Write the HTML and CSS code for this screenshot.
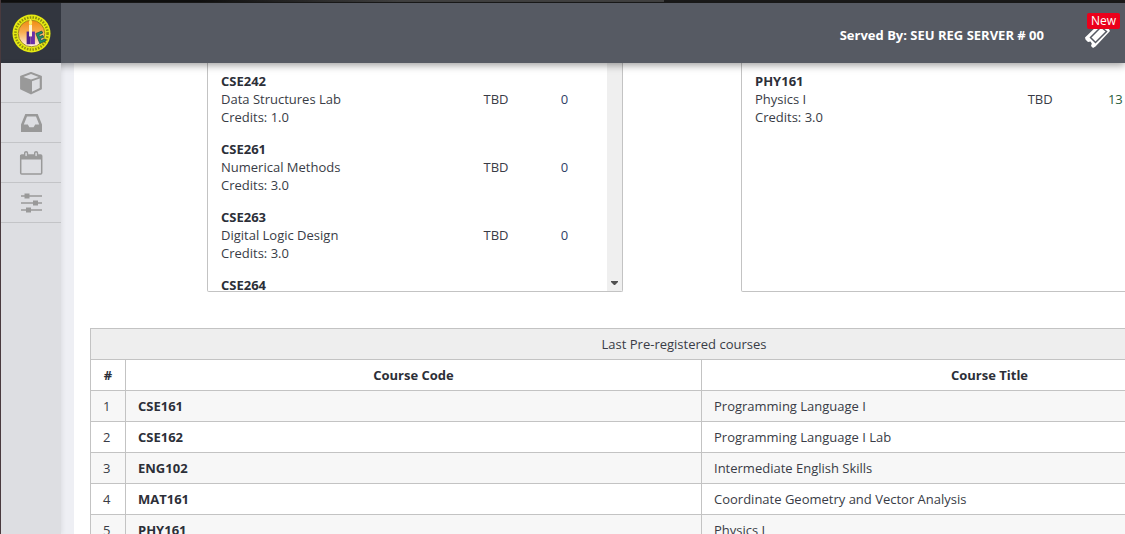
FILE: index.html
```
<!DOCTYPE html>
<html lang="en">
<head>
<meta charset="utf-8">
<title>Pre-registration</title>
<link rel="stylesheet" href="styles.css">
</head>
<body>
<div class="app">
  <div class="window-edge"><div class="window-tab"></div></div>
  <header class="topbar">
    <a class="brand" href="#" aria-label="Home">
      <svg class="seal" viewBox="0 0 40 40">
        <defs><linearGradient id="glow" x1="0" y1="0" x2="0" y2="1"><stop offset="0" stop-color="#f08a10"/><stop offset=".45" stop-color="#f8ae50"/><stop offset="1" stop-color="#fff4e8"/></linearGradient></defs>
        <circle cx="20" cy="20" r="19.5" fill="#e6ea12"/>
        <circle cx="20" cy="20" r="16.5" fill="none" stroke="#8f9010" stroke-width="2.600" stroke-dasharray="1.600 1.300"/>
        <circle cx="20" cy="20" r="13.600" fill="url(#glow)" stroke="#a08a1c"/>
        <path d="M15 18h4v13h-4z" fill="#4c208c"/>
        <path d="M19 18h4.500v13H19z" fill="#6a2fa8"/>
        <path d="M17.500 11h3v12h-3z" fill="#fff3d0"/>
        <path d="M19 5c2.500 3 2 5.500 0 6.500c-2-1-2.500-3.500 0-6.500z" fill="#ffef58"/>
        <path d="M24.500 20l6-2.500 1 2-4 1.700.8 2 3.300-1.300.8 2-3.300 1.300.8 2 4-1.600.8 2-6.200 2.600z" fill="#169468" stroke="#28474b" stroke-width=".8"/>
      </svg>
    </a>
    <span class="server">Served By: SEU REG SERVER # 00</span>
    <button class="ticket" type="button" aria-label="Tickets">
      <svg class="ticket-icon" viewBox="0 0 28 28">
        <path fill="#fff" d="M1 15.500L15 2h7l4 7L11.500 24.500 9 26l-2-2 .8-2.500L6.500 19.500l-2.500.5-2.500-2.500z"/>
        <path d="M6.500 15.500L17 5l5.500 4.500L11.500 20.500z" fill="#fff" stroke="#565a63" stroke-width="1.500"/>
      </svg>
      <span class="badge">New</span>
    </button>
  </header>
  <div class="body">
    <nav class="sidebar">
      <a class="nav-item" href="#" aria-label="Courses"><svg viewBox="0 0 24 24"><path d="M12 1.800l10 3.700v12.300l-10 4.700-10-4.700V5.500z" fill="#999" stroke="#999" stroke-width="1.800" stroke-linejoin="round"/><path d="M12 3l7.700 2.900L12 8.600 4.300 5.900zM13 10.300l7.700-2.800v9.500L13 20.700z" fill="#dddee2"/></svg></a>
      <a class="nav-item" href="#" aria-label="Inbox"><svg viewBox="0 0 24 24"><path fill="#999" fill-rule="evenodd" d="M6.300 3h12.400L23 13.500V21H2v-7.500zM8 5.500L4.800 13.500h4l1.600 2.700h4.200l1.600-2.700h4L17 5.500z"/></svg></a>
      <a class="nav-item" href="#" aria-label="Calendar"><svg viewBox="0 0 24 24"><rect x="1.700" y="4" width="21" height="19" rx="1" fill="none" stroke="#999" stroke-width="1.500"/><path d="M1 4h22v4.500H1z" fill="#999"/><rect x="5.700" y="0.700" width="2.800" height="5.300" rx="1.400" fill="#dddee2" stroke="#999" stroke-width="1.400"/><rect x="15.700" y="0.700" width="2.800" height="5.300" rx="1.400" fill="#dddee2" stroke="#999" stroke-width="1.400"/></svg></a>
      <a class="nav-item" href="#" aria-label="Settings"><svg viewBox="0 0 24 24"><path d="M2 5h21M2 12h21M2 19h21" stroke="#999" stroke-width="1.500"/><path d="M5.500 2.500h5v5h-5zM14 9.500h5v5h-5zM7 16.500h5v5H7z" fill="#999"/></svg></a>
    </nav>
    <main class="page">
      <div class="content">
        <div class="pickers">
          <section class="picker picker-scroll">
            <ul class="courses">
              <li class="course"><div><b>CSE242</b><br>Data Structures Lab<br>Credits: 1.0</div><span>TBD</span><span class="blue">0</span></li>
              <li class="course"><div><b>CSE261</b><br>Numerical Methods<br>Credits: 3.0</div><span>TBD</span><span class="blue">0</span></li>
              <li class="course"><div><b>CSE263</b><br>Digital Logic Design<br>Credits: 3.0</div><span>TBD</span><span class="blue">0</span></li>
              <li class="course"><div><b>CSE264</b></div></li>
            </ul>
            <div class="track"><svg class="arrow" viewBox="0 0 7 4"><path d="M0 0h7v1L4 4H3L0 1z" fill="#505050"/></svg></div>
          </section>
          <section class="picker">
            <ul class="courses">
              <li class="course"><div><b>PHY161</b><br>Physics I<br>Credits: 3.0</div><span>TBD</span><span class="green">13</span></li>
            </ul>
          </section>
        </div>
        <table class="history">
          <colgroup><col class="col-num"><col><col></colgroup>
          <thead>
            <tr><th class="title" colspan="3">Last Pre-registered courses</th></tr>
            <tr><th>#</th><th>Course Code</th><th>Course Title</th></tr>
          </thead>
          <tbody>
            <tr><td>1</td><td><b>CSE161</b></td><td>Programming Language I</td></tr>
            <tr><td>2</td><td><b>CSE162</b></td><td>Programming Language I Lab</td></tr>
            <tr><td>3</td><td><b>ENG102</b></td><td>Intermediate English Skills</td></tr>
            <tr><td>4</td><td><b>MAT161</b></td><td>Coordinate Geometry and Vector Analysis</td></tr>
            <tr><td>5</td><td><b>PHY161</b></td><td>Physics I</td></tr>
          </tbody>
        </table>
      </div>
    </main>
  </div>
</div>
</body>
</html>
```
FILE: styles.css
```
* { box-sizing: border-box; }
body {
  margin: 0;
  font: 13px/18px "Open Sans", "Noto Sans", sans-serif;
  color: #393c46;
  background: #fff;
}
.app {
  height: 100vh;
  display: flex;
  flex-direction: column;
  overflow: hidden;
  border-left: 1px solid #493a3e;
}
.window-edge { flex: none; height: 3px; background: #1b1b1b; }
.window-tab { width: 59%; height: 2px; background: linear-gradient(90deg, #101010 30%, #444 60%); }
.topbar {
  flex: none;
  height: 60px;
  display: flex;
  align-items: center;
  background: #565a63;
  color: #fff;
  position: relative;
  z-index: 2;
  box-shadow: 0 2px 8px rgba(0, 0, 0, .4);
}
.brand {
  width: 60px;
  height: 60px;
  display: grid;
  place-items: center;
  background: #32363f;
}
.seal { width: 39px; height: 39px; }
.server { margin-left: auto; font-weight: 700; padding-top: 4px; }
.ticket {
  position: relative;
  width: 41px;
  height: 60px;
  margin-left: 40px;
  padding: 0;
  border: 0;
  background: none;
  font: inherit;
  color: #fff;
  text-align: left;
}
.ticket-icon { display: block; width: 28px; height: 28px; margin-top: 5px; }
.badge {
  position: absolute;
  top: 10px;
  left: 3px;
  width: 33px;
  height: 16px;
  border-radius: 2px;
  background: #eb001b;
  font-size: 12px;
  line-height: 16px;
  text-align: center;
}
.body { flex: 1; min-height: 0; display: flex; }
.sidebar {
  flex: none;
  width: 60px;
  background: #dddee2;
  position: relative;
  z-index: 3;
  box-shadow: 1px 0 5px rgba(0, 0, 0, .08);
}
.nav-item {
  height: 40px;
  display: grid;
  place-items: center;
  border-bottom: 1px solid #c3c4c7;
}
.nav-item svg { width: 24px; height: 24px; }
.page {
  flex: 1;
  min-width: 0;
  overflow: hidden;
  border-left: 13px solid #eeeff4;
  padding-left: 16px;
}
.content { min-width: 1188px; }
.pickers {
  display: grid;
  grid-template-columns: 416px 416px;
  gap: 118px;
  padding-left: 117px;
  margin-bottom: 36px;
}
.picker {
  display: flex;
  height: 229px;
  overflow: hidden;
  border: 1px solid #c3c3c3;
  border-top: 0;
  border-radius: 0 0 2px 2px;
}
.courses { flex: 1; list-style: none; margin: 0; padding: 9px 0 0 13px; }
.course {
  display: grid;
  grid-template-columns: 68fr 20fr 12fr;
  align-items: center;
  margin-bottom: 14px;
}
b { font-weight: 700; color: #2c2f38; }
.blue { color: #2f4166; }
.green { color: #2b6040; }
.track {
  width: 15px;
  background: #efefef;
  display: flex;
  align-items: flex-end;
  justify-content: center;
  padding-bottom: 6px;
}
.arrow { width: 7px; height: 4px; }
.history {
  width: 100%;
  table-layout: fixed;
  border-collapse: collapse;
}
.col-num { width: 35px; }
.history th, .history td {
  height: 31px;
  padding: 6px 12px;
  border: 1px solid #c3c3c3;
  text-align: left;
}
.history th { text-align: center; color: #2c2f38; }
.history .title { background: #eee; font-weight: 400; color: #393c46; }
.history tbody tr:nth-child(odd) { background: #f7f7f7; }
```
